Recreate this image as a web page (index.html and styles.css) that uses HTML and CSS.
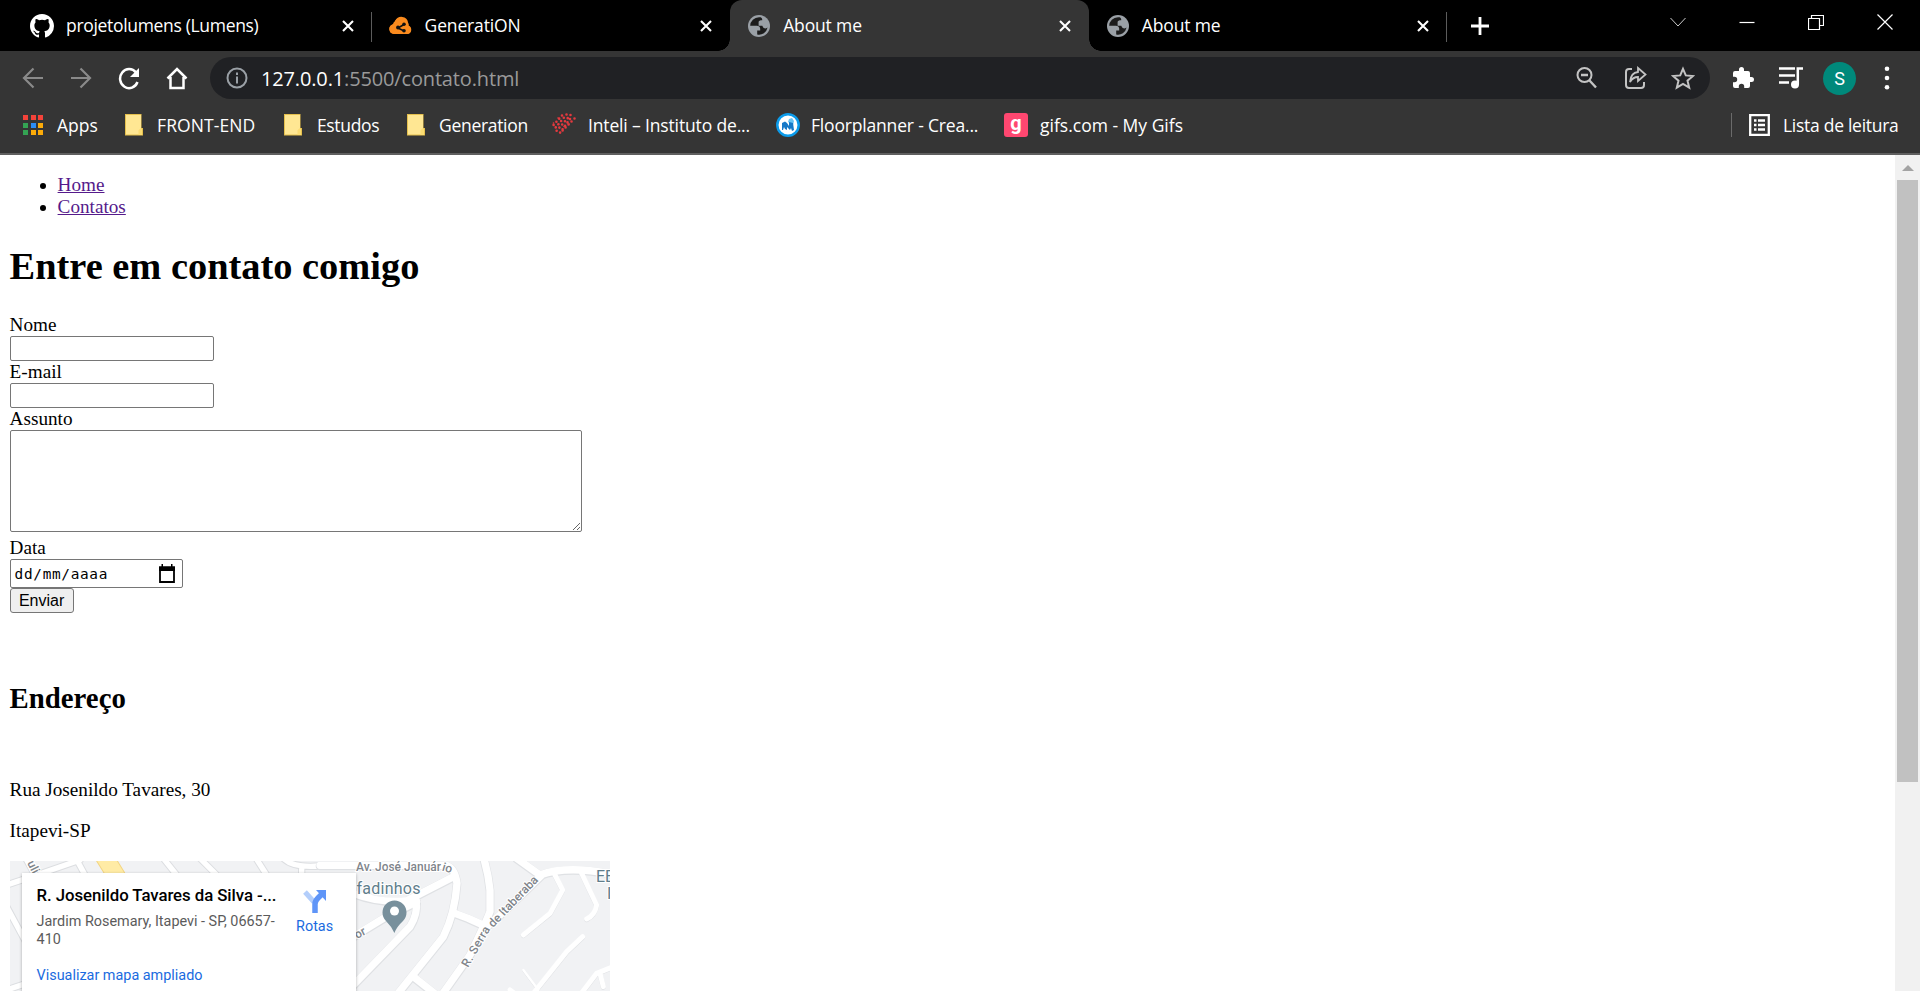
FILE: index.html
```
<!DOCTYPE html>
<html lang="pt-BR">
<head>
<meta charset="utf-8">
<title>About me</title>
<link rel="stylesheet" href="styles.css">
</head>
<body>
<svg class="defs" width="0" height="0">
  <symbol id="x" viewBox="0 0 12 12"><path d="M1 1l10 10M11 1L1 11" stroke="#fff" stroke-width="2.1" fill="none"/></symbol>
  <symbol id="globe" viewBox="0 0 24 24"><circle cx="12" cy="12" r="11" fill="#9aa0a6"/><path d="M12 3.2a8.8 8.8 0 0 0-8.8 8.6h6.6c2 0 3.4 1.2 3.4 3v1.8h-3v3.9a8.8 8.8 0 0 0 10.4-6.9c-.5.5-1.3.8-2 .8-1.700 0-2.900-1-3.300-2.600h-3.700V8.200c0-1.600 1.400-2 3.600-2 .2-1.100-.4-2.300-1.500-2.900z" fill="#1c1c1c"/></symbol>
  <symbol id="folder" viewBox="0 0 18 22"><path d="M0 0h16.500v14H18v7.500H0z" fill="#e5c04d"/><path d="M1 1h15v13.500l-2 2V20.500H1z" fill="#ffe793"/><path d="M13.500 21v-4.500l2-2H17V21z" fill="#fbdc72"/></symbol>
</svg>
<div class="window">
  <div class="tabs">
    <div class="tab">
      <svg class="fav" viewBox="0 0 16 16"><path fill="#fff" d="M8 0C3.580 0 0 3.580 0 8c0 3.540 2.290 6.530 5.470 7.590.4.070.55-.17.55-.38 0-.19-.01-.82-.01-1.490-2.010.37-2.530-.49-2.690-.94-.09-.23-.48-.94-.82-1.130-.28-.15-.68-.52-.01-.53.63-.01 1.080.58 1.230.82.72 1.210 1.870.87 2.330.66.07-.52.28-.87.51-1.070-1.780-.2-3.640-.89-3.640-3.950 0-.87.31-1.590.82-2.150-.08-.2-.36-1.020.08-2.120 0 0 .67-.21 2.200.82a7.600 7.600 0 0 1 4 0c1.530-1.040 2.200-.82 2.200-.82.44 1.100.16 1.920.08 2.120.51.560.82 1.270.82 2.150 0 3.070-1.870 3.750-3.650 3.950.29.25.54.73.54 1.480 0 1.070-.01 1.930-.01 2.200 0 .21.15.46.55.38A8 8 0 0 0 16 8c0-4.420-3.580-8-8-8z"/></svg>
      <span class="title t1">projetolumens (Lumens)</span><svg class="close"><use href="#x"/></svg>
    </div>
    <div class="tab sep">
      <svg class="fav" viewBox="0 0 24 24"><path fill="#fb8b1e" d="M5 20a5 5 0 0 1-1-9.800A4 4 0 0 1 6.500 7 6.500 6.500 0 0 1 19 8.500c1 2 1 3 .6 3.200A4.600 4.600 0 0 1 19 20z"/><path fill="#fb8b1e" d="M5.500 9a6.500 5.500 0 0 1 13 0l.5 2.500a4.400 4.400 0 0 1 0 8.500H5a5 5 0 0 1-1.500-9.600z"/><path d="M9 14l6-3.500M9 14l6 3" stroke="#111" stroke-width="1.500"/><circle cx="9" cy="13.500" r="1.900" fill="#111"/><circle cx="15" cy="10.200" r="1.800" fill="#111"/><circle cx="15" cy="16.800" r="1.800" fill="#111"/></svg>
      <span class="title t2">GeneratiON</span><svg class="close"><use href="#x"/></svg>
    </div>
    <div class="tab active">
      <svg class="fav"><use href="#globe"/></svg>
      <span class="title t3">About me</span><svg class="close"><use href="#x"/></svg>
    </div>
    <div class="tab">
      <svg class="fav"><use href="#globe"/></svg>
      <span class="title t3">About me</span><svg class="close"><use href="#x"/></svg>
    </div>
    <div class="newtab"><svg width="18" height="18"><path d="M9 0v18M0 9h18" stroke="#fff" stroke-width="2.800"/></svg></div>
    <div class="controls">
      <svg class="thin" viewBox="0 0 16 16"><path d="M.5 4L8 12l7.500-8"/></svg>
      <svg viewBox="0 0 16 16"><path d="M.5 8.500h15"/></svg>
      <svg viewBox="0 0 16 16"><path d="M.5 4.500h11v11H.5zM3.500 4V1.500h12v10H12"/></svg>
      <svg viewBox="0 0 16 16"><path d="M.5.5l15 15M15.500.5l-15 15"/></svg>
    </div>
  </div>
  <div class="toolbar">
    <div class="nav">
      <svg class="dim" viewBox="0 0 24 24"><path d="M22 12H3M12.500 2.500L3 12l9.500 9.500"/></svg>
      <svg class="dim" viewBox="0 0 24 24"><path d="M2 12h19M11.500 2.500L21 12l-9.500 9.500"/></svg>
      <svg viewBox="0 0 24 24"><path d="M20.500 16a9 9.500 0 1 1-1.500-9.500" stroke-width="2.500"/><path d="M22 2v9h-9z" fill="#fff" stroke="none"/></svg>
      <svg viewBox="0 0 24 24"><path d="M2.500 12.500L12 3l9.500 9.500M5.500 11v11h13V11" stroke-width="2.500"/></svg>
    </div>
    <div class="omnibox">
      <svg class="info" viewBox="0 0 22 22"><circle cx="11" cy="11" r="9.500"/><path d="M11 9.500v7M11 5.500v2.500"/></svg>
      <span class="url"><b>127.0.0.1</b>:5500/contato.html</span>
      <div class="omni-icons">
        <svg viewBox="0 0 24 24"><circle cx="9.500" cy="9" r="7"/><path d="M6 9h7M14.500 14.500L21 21.500" stroke-width="2.400"/></svg>
        <svg viewBox="0 0 24 24"><path d="M9 3H6a3 3 0 0 0-3 3v13a3 3 0 0 0 3 3h12a3 3 0 0 0 3-3v-3"/><path d="M15 2l7.500 6.500L15 15v-4c-4 0-6 1.500-8 5 .5-6 3-9.500 8-10z" stroke-width="1.800"/></svg>
        <svg viewBox="0 0 24 24"><path d="M12 2.800l2.800 6.600 7.200.6-5.500 4.700 1.700 7-6.200-3.700-6.200 3.700 1.700-7L2 10l7.200-.6z"/></svg>
      </div>
    </div>
    <div class="actions">
      <svg viewBox="0 0 24 24"><path fill="#fff" d="M20.500 11H19V7a2 2 0 0 0-2-2h-4V3.500a2.500 2.500 0 0 0-5 0V5H4a2 2 0 0 0-2 2v3.800h1.500a2.700 2.700 0 0 1 0 5.400H2V20a2 2 0 0 0 2 2h3.800v-1.500a2.700 2.700 0 0 1 5.400 0V22H17a2 2 0 0 0 2-2v-4h1.500a2.500 2.500 0 0 0 0-5z"/></svg>
      <svg viewBox="0 0 24 24"><path d="M0 2.500h16M0 9.500h16M0 16.500h10" stroke="#fff" stroke-width="2.500"/><circle cx="16" cy="18.500" r="4" fill="#fff"/><path d="M18.800 18.500V2.500H24" stroke="#fff" stroke-width="2.500" fill="none"/></svg>
      <span class="avatar">S</span>
      <svg viewBox="0 0 24 24" fill="#fff"><circle cx="12" cy="2.800" r="2.300"/><circle cx="12" cy="12" r="2.300"/><circle cx="12" cy="21.200" r="2.300"/></svg>
    </div>
  </div>
  <div class="bookmarks">
    <div class="bm b1"><svg width="20" height="21" viewBox="0 0 20 21"><g fill="#f4433a"><path d="M0 0h5v5H0zM8 0h5v5H8zM15 0h5v5h-5z"/></g><path fill="#34a353" d="M0 8h5v5H0zM0 15h5v5H0z"/><path fill="#2b8cf5" d="M8 8h5v5H8z"/><path fill="#fbab09" d="M15 8h5v5h-5zM8 15h5v5H8zM15 15h5v5h-5z"/></svg><span>Apps</span></div>
    <div class="bm b2"><svg width="18" height="22"><use href="#folder"/></svg><span>FRONT-END</span></div>
    <div class="bm b3"><svg width="18" height="22"><use href="#folder"/></svg><span>Estudos</span></div>
    <div class="bm b4"><svg width="18" height="22"><use href="#folder"/></svg><span>Generation</span></div>
    <div class="bm b5"><svg width="24" height="24" viewBox="0 0 24 24" fill="none" stroke="#e5393f" stroke-linecap="round"><path stroke-width="2.600" stroke-dasharray="0 4.200" d="M10 2.500L1.500 12M14.500 1.500L2 16.500M18.500 2L4 18.500M18 6L6 22.500M22.500 5.500L9 19"/><path stroke-width="1.600" d="M6 5h0M1.500 10h0M6 11.500h0M12 13.500h0M17 11h0"/></svg><span>Inteli – Instituto de...</span></div>
    <div class="bm b6"><svg width="24" height="24" viewBox="0 0 24 24"><circle cx="12" cy="12" r="10.700" fill="#fff" stroke="#0c9bea" stroke-width="2.500"/><path d="M12 9l1-3 3-1 2 3-1 4z" fill="#67c3f4"/><path d="M6 10l3-1.500 2 1.500 2 3V9l4 1 1 7-2 1-1-3-1 2-3-3v3l-2-1-1-2-1 3H6z" fill="#1679c7"/></svg><span>Floorplanner - Crea...</span></div>
    <div class="bm b7"><i class="gif">g</i><span>gifs.com - My Gifs</span></div>
    <div class="bm b8"><svg width="21" height="22" viewBox="0 0 21 22"><path d="M1.200 1.200h18.600v19.600H1.200z" fill="none" stroke="#fff" stroke-width="2.300"/><path d="M5 6.500h2.500M5 11h2.500M5 15.500h2.500M9 6.500h7M9 11h7M9 15.500h7" stroke="#fff" stroke-width="2.300"/></svg><span>Lista de leitura</span></div>
  </div>
  <div class="viewport">
    <main class="page">
      <ul class="menu"><li><a href="#">Home</a></li><li><a href="#">Contatos</a></li></ul>
      <h1>Entre em contato comigo</h1>
      <form class="form">
        <label>Nome</label><input class="line" type="text">
        <label>E-mail</label><input class="line" type="text">
        <label>Assunto</label><textarea class="area"></textarea>
        <label>Data</label>
        <div class="date"><span>dd/mm/aaaa</span><svg width="16" height="20" viewBox="0 0 16 20"><path d="M1 3.500h14V18H1z" fill="none" stroke="#000" stroke-width="1.800"/><path d="M0 2.500h16V7H0zM2.500 0H4v3H2.500zM12 0h1.500v3H12z"/></svg></div>
        <button class="send" type="button">Enviar</button>
      </form>
      <h2>Endereço</h2>
      <p>Rua Josenildo Tavares, 30</p>
      <p>Itapevi-SP</p>
      <div class="map">
        <svg class="roads" width="600" height="130" viewBox="0 0 600 130">
          <defs>
            <g id="west">
              <path d="M20 375L110 345 240 300M20 440L85 560M20 690L80 670M225 290L255 345M490 295L530 345M600 295L650 345M765 290L800 345M80 300L105 345"/>
              <path d="M850 295Q880 325 960 318M905 320V345"/>
            </g>
            <g id="east">
              <path d="M0 76H380Q405 85 411 130 405 220 370 290L230 465"/>
              <path d="M100 160Q180 190 260 182L400 110"/>
              <path d="M100 290L190 235 290 185"/>
              <path d="M288 180Q295 220 270 260L100 435"/>
              <path d="M490 50Q505 100 510 150V215L495 250 450 345 365 465"/>
              <path d="M405 220L445 235 500 260M280 410L350 465"/>
              <path d="M590 55L660 105Q740 75 875 102M665 105L540 225 500 260"/>
              <path d="M705 105L728 150 690 220 610 285" stroke-width="15"/>
              <path d="M785 100L830 195Q825 225 800 237" stroke-width="15"/>
              <path d="M788 290L740 335 640 460" stroke-width="15"/>
              <path d="M880 380L830 400 780 465M840 400L850 440M570 450L590 465" stroke-width="15"/>
              <path d="M610 390L655 450" stroke-width="7"/>
            </g>
          </defs>
          <g fill="none" stroke-linecap="round" stroke-linejoin="round">
            <g transform="translate(-10 -101) scale(.33333)"><use href="#west" stroke="#dcdee1" stroke-width="22"/><use href="#west" stroke="#fff" stroke-width="16"/><path d="M310 285L350 350" stroke="#f3d583" stroke-width="56"/><path d="M310 285L350 350" stroke="#ffeba5" stroke-width="50"/></g>
            <g transform="translate(310 -21) scale(.33333)"><g transform="translate(0 2)"><use href="#east" stroke="#dfe1e4" stroke-width="26"/></g><use href="#east" stroke="#fff" stroke-width="22"/></g>
          </g>
          <path d="M384.400 72Q382 66 376 60a12 12 0 1 1 17 0Q386.500 66 384.400 72z" fill="#78909c"/><circle cx="384.500" cy="50" r="4.500" fill="#fff"/>
          <g class="street">
            <text x="346" y="10" textLength="85">Av. José Január</text><text transform="translate(431.500 9.500) rotate(16)">io</text>
            <text transform="translate(347 78) rotate(-28)">or</text>
            <text transform="translate(458 107) rotate(-60)" textLength="45">R. Serra</text><text transform="translate(483 67) rotate(-46)" textLength="66">de Itaberaba</text>
            <text transform="translate(17 2) rotate(63)">ulis</text>
          </g>
          <g class="poi"><text x="346.500" y="33" textLength="64">fadinhos</text><text x="586" y="21">EE</text><text x="597" y="38">I</text></g>
        </svg>
        <div class="card">
          <div class="place"><b>R. Josenildo Tavares da Silva -...</b><span>Jardim Rosemary, Itapevi - SP, 06657-410</span><a>Visualizar mapa ampliado</a></div>
          <div class="route"><svg width="24" height="24" viewBox="0 0 24 24"><path d="M2 3l9 10" stroke="#b3cefb" stroke-width="5"/><path d="M12 24V15Q12 12 15 9l4-4" stroke="#5f95f8" stroke-width="5.500" fill="none"/><path d="M13 1h10v11z" fill="#5f95f8"/></svg><span>Rotas</span></div>
        </div>
      </div>
    </main>
    <div class="scrollbar"><i class="up"></i><i class="thumb"></i></div>
  </div>
</div>
</body>
</html>
```
FILE: styles.css
```
* { box-sizing: border-box; }
body { margin: 0; background: #fff; overflow: hidden; }
svg { display: block; flex: none; }
.defs { position: absolute; }
.window { display: flex; flex-direction: column; height: 991px; font-family: "Open Sans", "Noto Sans", sans-serif; color: #fff; }
.tabs { display: flex; height: 51px; flex: none; background: #000; padding-left: 13px; }
.tab { position: relative; display: flex; align-items: center; width: 358.6px; height: 51px; padding: 0 18px 0 17px; flex: none; }
.tab.sep::before, .newtab::before { content: ""; position: absolute; left: -1px; top: 12px; width: 1px; height: 30px; background: #5c5c5c; }
.tab.active { background: #353535; border-radius: 12px 12px 0 0; }
.tab.active::before, .tab.active::after { content: ""; position: absolute; bottom: 0; width: 12px; height: 12px; }
.tab.active::before { left: -12px; background: radial-gradient(circle at 0 0, #000 11.500px, #353535 12px); }
.tab.active::after { right: -12px; background: radial-gradient(circle at 100% 0, #000 11.500px, #353535 12px); }
.fav { width: 24px; height: 24px; margin-right: 12px; }
.title { font-size: 17.500px; flex: 1; white-space: nowrap; padding-bottom: 1px; letter-spacing: -.15px; }
.t1 { letter-spacing: -.32px; }
.close { width: 12px; height: 12px; }
.newtab { position: relative; width: 66px; display: flex; align-items: center; justify-content: center; }
.controls { display: flex; margin-left: auto; height: 44px; align-items: center; gap: 53px; padding-right: 27px; }
.controls svg { width: 16px; height: 16px; fill: none; stroke: #fff; stroke-width: 1.200; }
.controls .thin { stroke-width: .8; }
.toolbar { display: flex; align-items: center; height: 54px; flex: none; background: #353535; padding-left: 21px; }
.nav { display: flex; gap: 24px; width: 189px; flex: none; }
.nav svg { width: 24px; height: 24px; fill: none; stroke: #fff; stroke-width: 2.200; }
.nav .dim { stroke: #8a8a8a; }
.omnibox { display: flex; flex: none; align-items: center; width: 1500px; height: 42px; border-radius: 21px; background: #202124; padding: 0 15px 0 16px; }
.info { width: 22px; height: 22px; fill: none; stroke: #9aa0a6; stroke-width: 2; }
.url { font-size: 20px; margin-left: 13px; color: #9a9a9a; flex: 1; white-space: nowrap; letter-spacing: -.15px; }
.url b { font-weight: 400; color: #fff; }
.omni-icons { display: flex; gap: 24px; }
.omni-icons svg { width: 24px; height: 24px; fill: none; stroke: #c3c3c3; stroke-width: 2; }
.actions { display: flex; flex: none; align-items: center; margin-left: 21px; }
.actions svg { width: 24px; height: 24px; margin-right: 24px; }
.actions svg:last-child { margin-right: 0; }
.avatar { width: 33px; height: 33px; margin: 0 19px 0 -4px; border-radius: 50%; background: #00897b; font: 18px/33px Roboto, sans-serif; text-align: center; }
.bookmarks { display: flex; align-items: center; height: 50px; flex: none; padding: 0 0 8px 23px; background: #353535; border-bottom: 2px solid #5f5f5f; font-size: 17.500px; }
.bm { display: flex; align-items: center; white-space: nowrap; }
.b1 { width: 102px; gap: 14px; }
.b2 { width: 159px; gap: 14px; letter-spacing: .1px; }
.b3 { width: 123px; gap: 15px; letter-spacing: -.35px; }
.b4 { width: 145px; gap: 14px; letter-spacing: -.3px; }
.b5 { width: 224px; gap: 12px; letter-spacing: -.15px; }
.b6 { width: 228px; gap: 11px; letter-spacing: -.18px; }
.b7 { gap: 12px; }
.b8 { margin-left: auto; gap: 13px; width: 189px; height: 24px; padding-left: 17px; border-left: 1px solid #6b6b6b; letter-spacing: -.28px; }
.gif { width: 24px; height: 24px; border-radius: 3px; background: #ff4770; font: bold 20px/20px Roboto, sans-serif; text-align: center; }
.viewport { display: flex; flex: 1; min-height: 0; color: #000; background: #fff; }
.page { flex: 1; padding: 19px 10px 0 9.600px; font: 19.200px/22px "Liberation Serif", serif; overflow: hidden; }
.menu { margin: 0; padding-left: 48px; }
.menu a { color: #551a8b; }
.page h1 { margin: 26px 0; font-size: 38.400px; line-height: 44px; }
.form { display: flex; flex-direction: column; align-items: flex-start; }
.line, .area { margin: 0; border: 1px solid #767676; border-radius: 2px; background: #fff; }
.line { width: 204px; height: 25px; }
.area { width: 572px; height: 102px; margin-bottom: 5px; }
.date { display: flex; align-items: center; justify-content: space-between; width: 173px; height: 29px; padding: 0 7px 0 4px; border: 1px solid #767676; border-radius: 2px; font: 14.400px "DejaVu Sans Mono", monospace; letter-spacing: .68px; }
.send { width: 64px; height: 25px; padding: 0; border: 1px solid #767676; border-radius: 3px; background: #efefef; font: 16px/20px "Liberation Sans", sans-serif; }
.page h2 { margin: 69px 0 64px; font-size: 28.800px; line-height: 33px; }
.page p { margin: 0 0 19px; }
.map { position: relative; width: 600px; height: 130px; overflow: hidden; background: #f1f2f4; font-family: Roboto, sans-serif; }
.street text { font-size: 12px; font-weight: 500; fill: #80858b; stroke: #fff; stroke-width: 2px; paint-order: stroke; }
.poi text { font-size: 16px; fill: #607d8b; stroke: #fff; stroke-width: 2px; paint-order: stroke; }
.card { position: absolute; left: 12px; top: 12px; display: flex; width: 334px; height: 140px; padding: 11px 15px; background: #fff; box-shadow: 0 1px 3px rgba(0,0,0,.3); }
.place { display: flex; flex-direction: column; width: 248px; flex: none; font-size: 14.400px; line-height: 18px; }
.place b { font-size: 16.800px; line-height: 22px; font-weight: 500; letter-spacing: -.06px; white-space: nowrap; margin-bottom: 7px; }
.place span { color: #5b5b5b; }
.place a { color: #1a6be0; margin-top: 18px; }
.route { display: flex; flex-direction: column; align-items: center; width: 60px; flex: none; padding-top: 5px; font-size: 14.400px; line-height: 18px; color: #1a6be0; gap: 5px; }
.scrollbar { display: flex; flex-direction: column; align-items: center; width: 25px; background: #f1f1f1; }
.up { margin: 10px 0 9px; border: 6px solid transparent; border-top: 0; border-bottom: 6px solid #a3a3a3; }
.thumb { width: 21px; height: 602px; background: #c1c1c1; }
```
